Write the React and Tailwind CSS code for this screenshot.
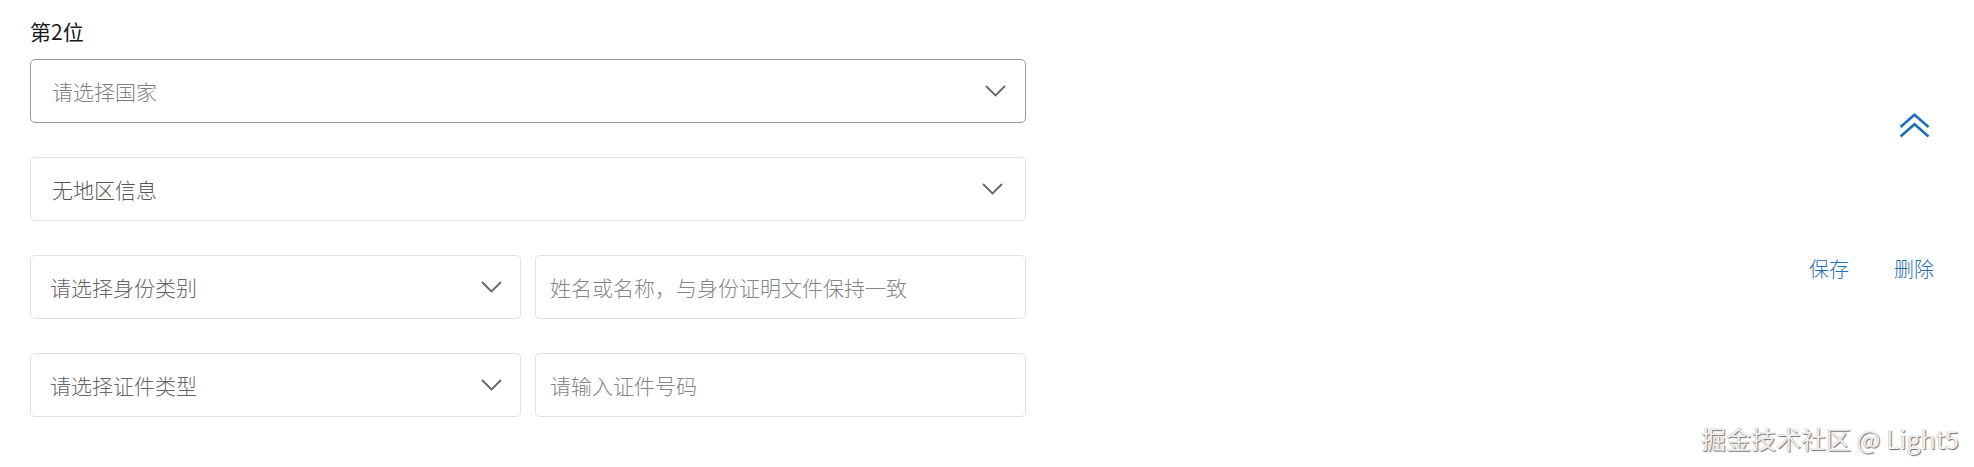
import React from "react";

function Chevron({ className = "" }) {
  return (
    <svg width="21" height="12" viewBox="0 0 21 12" className={className} fill="none">
      <polyline points="1,1 10.5,10.5 20,1" stroke="#666" strokeWidth="1.8" strokeLinejoin="miter" />
    </svg>
  );
}

function Select({ text, color, border = "border-[#e2e2e2]", pl = "pl-[21px]", pr = "pr-[19px]", className = "" }) {
  return (
    <div className={`h-[64px] flex items-center justify-between rounded-[5px] border bg-white ${border} ${pl} ${pr} ${className}`}>
      <span className={`text-[21px] leading-[28px] font-light ${color}`}>{text}</span>
      <Chevron />
    </div>
  );
}

function Input({ text, className = "" }) {
  return (
    <div className={`h-[64px] flex items-center rounded-[5px] border border-[#e2e2e2] bg-white pl-[14px] ${className}`}>
      <span className="text-[21px] leading-[28px] font-light text-[#858585]">{text}</span>
    </div>
  );
}

export default function App() {
  return (
    <div className="relative h-[467px] w-full bg-white flex font-['Noto_Sans_CJK_SC','Noto_Sans',sans-serif]">
      <div className="ml-[30px] w-[996px] flex flex-col pt-[17px]">
        <div className="text-[21px] leading-[28px] font-normal text-[#1a1a1a]">第2位</div>
        <Select
          text="请选择国家"
          color="text-[#808080]"
          border="border-[#9a9a9a]"
          className="mt-[14px]"
        />
        <Select text="无地区信息" color="text-[#555]" pr="pr-[22px]" className="mt-[34px]" />
        <div className="mt-[34px] grid grid-cols-2 gap-[14px]">
          <Select text="请选择身份类别" color="text-[#666]" pl="pl-[19px]" pr="pr-[18px]" />
          <Input text="姓名或名称，与身份证明文件保持一致" />
        </div>
        <div className="mt-[34px] grid grid-cols-2 gap-[14px]">
          <Select text="请选择证件类型" color="text-[#666]" pl="pl-[19px]" pr="pr-[18px]" />
          <Input text="请输入证件号码" />
        </div>
      </div>

      <div className="flex-1 flex flex-col items-end pt-[113px] pr-[40px]">
        <svg width="31" height="25" viewBox="0 0 31 25" fill="none" className="mr-[4px]">
          <polyline points="1.5,14 15.5,1.8 29.5,14" stroke="#1d6fb8" strokeWidth="2.6" />
          <polyline points="1.5,23.5 15.5,11.3 29.5,23.5" stroke="#1d6fb8" strokeWidth="2.6" />
        </svg>
        <div className="mt-[117px] flex gap-[45px] text-[20px] leading-[28px] font-light text-[#1f6cb0]">
          <span>保存</span>
          <span>删除</span>
        </div>
      </div>

      <div className="absolute right-[15px] bottom-[13px] text-[25px] leading-[32px] text-[#f0f0f0] [text-shadow:1px_1px_1px_rgba(0,0,0,0.55),-0.5px_-0.5px_0_rgba(0,0,0,0.25)]">
        掘金技术社区 @ Light5
      </div>
    </div>
  );
}
